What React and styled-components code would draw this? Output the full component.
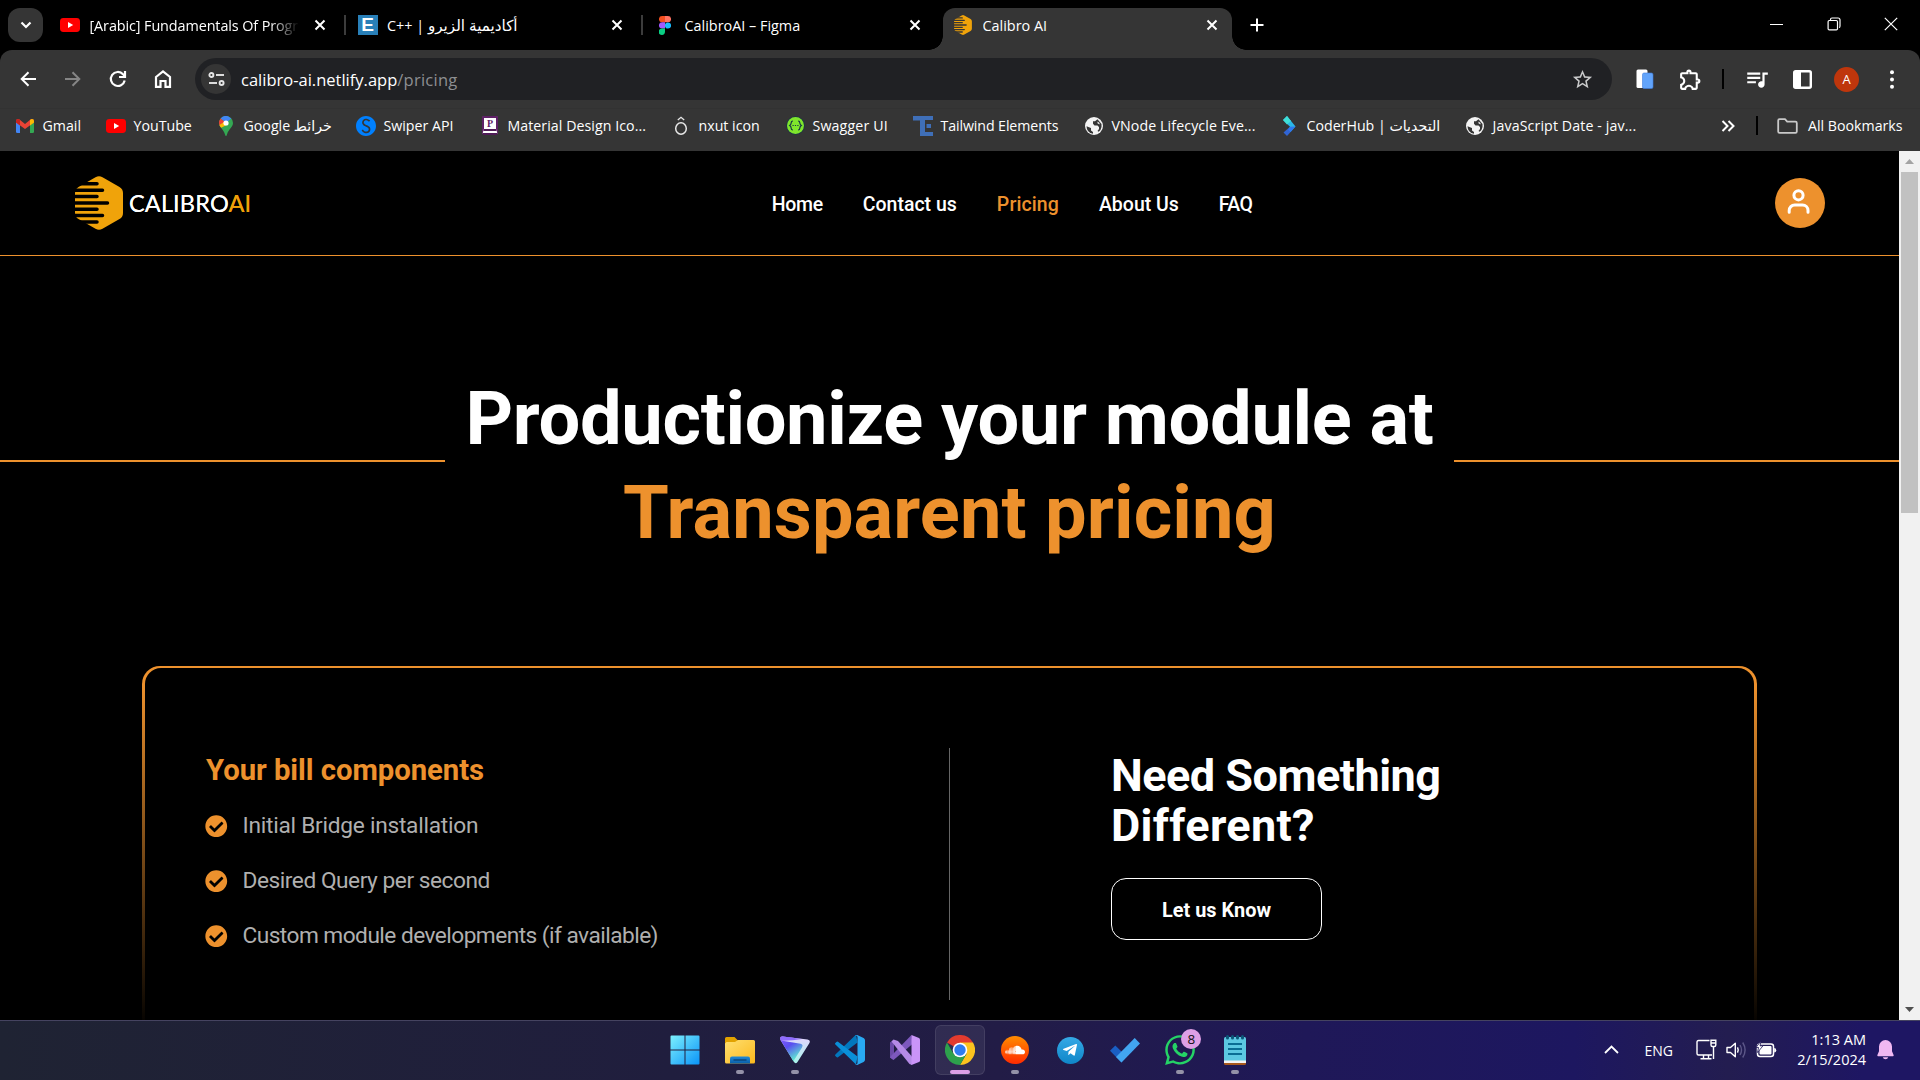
import React from "react";
import styled, { createGlobalStyle, css } from "styled-components";
import { SiSwiper } from "react-icons/si";
import { FaCheckCircle, FaWhatsapp, FaSoundcloud, FaTelegramPlane } from "react-icons/fa";
import { MdOutlineExtension, MdQueueMusic, MdStarBorder } from "react-icons/md";

const UI_FONT = '"Open Sans", "DejaVu Sans", sans-serif';
const SITE_FONT = 'Roboto, "Liberation Sans", sans-serif';
const ORANGE = "#ed912d";

const GlobalStyle = createGlobalStyle`
  * { box-sizing: border-box; }
  body { margin: 0; background: #000; overflow: hidden; }
`;

const Desktop = styled.div`
  display: flex;
  flex-direction: column;
  width: 1920px;
  height: 1080px;
  overflow: hidden;
  background: #000;
  font-family: ${UI_FONT};
  color: #fff;
`;

/* ---------- Tab strip ---------- */

const TabStrip = styled.div`
  display: flex;
  flex: none;
  height: 50px;
  padding: 8px 0 0 8px;
  background: #000;
`;

const TabSearch = styled.div`
  display: flex;
  align-items: center;
  justify-content: center;
  width: 35px;
  height: 34px;
  margin-right: 6px;
  border-radius: 12px;
  background: #353535;
`;

const Tab = styled.div`
  position: relative;
  display: flex;
  flex: none;
  align-items: center;
  width: 297.5px;
  height: 42px;
  padding: 0 0.7px 8px 11px;

  ${(p) =>
    p.$active &&
    css`
      width: 289px;
      margin-left: 1.5px;
      padding: 0 10px 8px;
      background: #353535;
      border-radius: 12px 12px 0 0;

      &::before,
      &::after {
        content: "";
        position: absolute;
        bottom: 0;
        width: 14px;
        height: 14px;
      }
      &::before {
        left: -14px;
        background: radial-gradient(circle at 0 0, transparent 13.5px, #353535 14px);
      }
      &::after {
        right: -14px;
        background: radial-gradient(circle at 100% 0, transparent 13.5px, #353535 14px);
      }
    `}
`;

const Favicon = styled.div`
  display: flex;
  flex: none;
  align-items: center;
  justify-content: center;
  width: 20px;
  height: 20px;
  margin-right: ${(p) => p.$gap ?? 9.5}px;
`;

const TabTitle = styled.div`
  flex: 1;
  overflow: hidden;
  padding-top: 1px;
  white-space: nowrap;
  font-size: 14.4px;
  line-height: 20px;
  ${(p) =>
    p.$fade &&
    css`
      margin-right: 11px;
      letter-spacing: -0.1px;
      mask-image: linear-gradient(90deg, #000 86%, transparent);
    `}
`;

const Arabic = styled.bdi`
  font-size: 15.2px;
  line-height: 1;
`;

const CloseSlot = styled.div`
  display: flex;
  align-items: center;
  justify-content: center;
  width: 20px;
  height: 20px;
  margin-right: ${(p) => (p.$active ? 0 : 14)}px;
`;

const TabDivider = styled.div`
  width: 2px;
  height: 20px;
  background: ${(p) => (p.$hidden ? "transparent" : "#3c3c3c")};
`;

const NewTab = styled.div`
  display: flex;
  align-items: center;
  justify-content: center;
  width: 34px;
  height: 34px;
  margin-left: 8px;
`;

const WindowControls = styled.div`
  display: flex;
  height: 34px;
  margin: -1px 1px 0 auto;
`;

const WindowControl = styled.div`
  display: flex;
  align-items: center;
  justify-content: center;
  width: 57px;
`;

/* ---------- Toolbar ---------- */

const ToolbarBack = styled.div`
  flex: none;
  background: #353535;
  border-radius: 12px 12px 0 0;
`;

const Toolbar = styled.div`
  display: flex;
  align-items: center;
  height: 58px;
  padding: 0 6px 0 5px;
`;

const ToolSlot = styled.div`
  display: flex;
  flex: none;
  align-items: center;
  justify-content: center;
  width: ${(p) => p.$w ?? 45}px;
  height: 42px;
`;

const Omnibox = styled.div`
  display: flex;
  align-items: center;
  width: 1417px;
  height: 42px;
  margin: 0 10px 0 10px;
  padding: 0 18px 0 6px;
  border-radius: 21px;
  background: #202124;
`;

const SiteInfo = styled.div`
  display: flex;
  align-items: center;
  justify-content: center;
  width: 30px;
  height: 30px;
  margin-right: 10px;
  border-radius: 50%;
  background: #353535;
`;

const Url = styled.div`
  flex: 1;
  font-size: 16.5px;
  line-height: 24px;
  padding-top: 1px;
`;

const UrlPath = styled.span`
  color: #8d8f92;
  letter-spacing: 0.25px;
`;

const ToolDivider = styled.div`
  width: 2px;
  height: 20px;
  background: #000;
`;

const Avatar = styled.div`
  width: 25px;
  height: 25px;
  border-radius: 50%;
  background: #bf360c;
  font-size: 13px;
  line-height: 25px;
  text-align: center;
`;

/* ---------- Bookmarks ---------- */

const BookmarksBar = styled.div`
  display: flex;
  align-items: center;
  height: 43px;
  padding: 0 0 9px 15px;
  border-top: 1px solid #323232;
  font-size: 14.2px;
  line-height: 20px;
  white-space: nowrap;
`;

const Bookmark = styled.div`
  display: flex;
  flex: none;
  align-items: center;
  width: ${(p) => p.$w}px;
  letter-spacing: ${(p) => p.$ls ?? 0}px;
`;

const Overflow = styled.div`
  display: flex;
  justify-content: center;
  width: 20px;
  margin-left: auto;
`;

const BookmarkDivider = styled.div`
  width: 2px;
  height: 19px;
  margin: 0 19px 0 18px;
  background: #000;
`;

const AllBookmarks = styled.div`
  display: flex;
  align-items: center;
  gap: 10px;
  width: 143px;
`;

/* ---------- Web page ---------- */

const Viewport = styled.div`
  display: flex;
  flex: none;
  height: 869px;
  overflow: hidden;
`;

const Page = styled.main`
  display: flex;
  flex-direction: column;
  width: 1899px;
  background: #000;
  font-family: ${SITE_FONT};
`;

const SiteHeader = styled.header`
  display: grid;
  grid-template-columns: 1fr auto 1fr;
  align-items: center;
  flex: none;
  height: 105px;
  padding: 0 74px 0 75px;
  border-bottom: 1px solid ${ORANGE};
`;

const Brand = styled.div`
  display: flex;
  align-items: center;
  gap: 6px;
`;

const Wordmark = styled.div`
  font: 400 23.5px/28px Lato, sans-serif;
  letter-spacing: 0.15px;
  padding-bottom: 1px;
  text-shadow: 0 0 0.6px currentColor;
`;

const WordmarkAccent = styled.span`
  color: #f0a009;
`;

const Nav = styled.nav`
  display: flex;
  gap: 40px;
  margin-left: 124px;
`;

const NavLink = styled.a`
  font-size: 19.5px;
  font-weight: 500;
  line-height: 24px;
  padding-top: 3px;
  letter-spacing: ${(p) => p.$ls ?? 0}px;
  color: ${(p) => (p.$active ? ORANGE : "#fff")};
`;

const UserButton = styled.div`
  display: flex;
  align-items: center;
  justify-content: center;
  justify-self: end;
  width: 50px;
  height: 50px;
  border-radius: 50%;
  background: ${ORANGE};
`;

const Hero = styled.section`
  display: flex;
  align-items: center;
  flex: none;
  height: 410px;
`;

const HeroRule = styled.div`
  width: 445px;
  height: 2px;
  background: ${ORANGE};
`;

const HeroTitle = styled.h1`
  flex: 1;
  margin: 0;
  padding-top: 10px;
  font-size: 74px;
  font-weight: 700;
  line-height: 94.5px;
  letter-spacing: -0.32px;
  text-align: center;
`;

const HeroAccent = styled.span`
  display: block;
  color: ${ORANGE};
  letter-spacing: 0.1px;
`;

const CardFrame = styled.section`
  flex: none;
  width: 1615px;
  height: 364px;
  margin-left: 142px;
  padding: 2px 3px 0;
  border-radius: 18px 18px 0 0;
  background: linear-gradient(${ORANGE} 16px, #000 100%);
`;

const Card = styled.div`
  display: grid;
  grid-template-columns: 804px 1px 1fr;
  height: 100%;
  padding-top: 80px;
  border-radius: 16px 16px 0 0;
  background: #000;
`;

const BillColumn = styled.div`
  padding: 4px 0 0 60px;
`;

const BillTitle = styled.h2`
  margin: 0 0 24px 1px;
  color: ${ORANGE};
  font-size: 29.3px;
  font-weight: 700;
  line-height: 36px;
  letter-spacing: -0.05px;
`;

const BillList = styled.ul`
  display: flex;
  flex-direction: column;
  gap: 27px;
  margin: 0;
  padding: 0;
  list-style: none;
`;

const BillItem = styled.li`
  display: flex;
  align-items: center;
  gap: 15px;
  height: 28px;
  color: #afafaf;
  font-size: 22.7px;
  line-height: 28px;
  letter-spacing: ${(p) => p.$ls}px;
`;

const CardDivider = styled.div`
  width: 1px;
  height: 252px;
  background: #666;
`;

const ContactColumn = styled.div`
  padding: 3px 0 0 161px;
`;

const ContactTitle = styled.h2`
  margin: 0 0 27px;
  font-size: 45px;
  font-weight: 700;
  line-height: 50px;
`;

const ContactLine = styled.span`
  display: block;
  letter-spacing: ${(p) => p.$ls}px;
`;

const ContactButton = styled.button`
  display: block;
  width: 211px;
  height: 62px;
  padding: 3px 0 0;
  border: 1px solid #fff;
  border-radius: 15px;
  background: transparent;
  color: #fff;
  font: 700 19.9px/24px ${SITE_FONT};
`;

const Scrollbar = styled.div`
  display: flex;
  flex-direction: column;
  align-items: center;
  justify-content: space-between;
  width: 21px;
  background: #f1f1f1;
`;

const ScrollArrow = styled.div`
  display: flex;
  align-items: center;
  justify-content: center;
  height: 21px;
`;

const ScrollThumb = styled.div`
  width: 17px;
  height: 341px;
  margin-bottom: auto;
  background: #c1c1c1;
`;

/* ---------- Taskbar ---------- */

const Taskbar = styled.footer`
  display: flex;
  flex: none;
  height: 60px;
  padding-left: 656.5px;
  border-top: 1px solid #454360;
  background: linear-gradient(
    90deg,
    #1f2333 0%,
    #201e3e 35%,
    #221c46 52%,
    #1f1858 68%,
    #1d1760 82%,
    #231d50 90%,
    #1e1663 97%,
    #1e1663 100%
  );
`;

const TaskSlot = styled.div`
  display: flex;
  flex: none;
  justify-content: center;
  width: 55.1px;
  margin-left: ${(p) => (p.$first ? 0.5 : 0)}px;
`;

const TaskTile = styled.div`
  display: flex;
  flex-direction: column;
  align-items: center;
  width: 50px;
  height: 50px;
  margin-top: 4px;
  padding-top: 10px;
  border-radius: 6px;
  border: 1px solid ${(p) => (p.$active ? "rgba(255,255,255,0.09)" : "transparent")};
  background: ${(p) => (p.$active ? "rgba(255,255,255,0.07)" : "transparent")};
`;

const TaskIcon = styled.div`
  position: relative;
  display: flex;
  align-items: center;
  justify-content: center;
  width: 30px;
  height: 28px;
  margin-bottom: 6px;
  svg { flex: none; }
`;

const RoundIcon = styled.div`
  display: flex;
  flex: none;
  align-items: center;
  justify-content: center;
  width: ${(p) => p.$size}px;
  height: ${(p) => p.$size}px;
  border-radius: 50%;
  background: ${(p) => p.$fill};
`;

const Indicator = styled.div`
  width: ${(p) => (p.$active ? 20 : 8)}px;
  height: 4px;
  border-radius: 2px;
  background: ${(p) => (p.$active ? "#dc9fe6" : "#9492a8")};
`;

const Badge = styled.div`
  position: absolute;
  top: -7px;
  right: -6px;
  width: 20px;
  height: 20px;
  border-radius: 50%;
  background: #dd9fe5;
  color: #111;
  font-size: 13.5px;
  line-height: 20px;
  text-align: center;
`;

const Tray = styled.div`
  display: flex;
  align-items: center;
  margin-left: auto;
  padding: 0 16px 2px 0;
`;

const TrayIcon = styled.div`
  display: flex;
  align-items: center;
  justify-content: center;
  width: ${(p) => p.$w ?? 30}px;
`;

const Language = styled.div`
  margin: 2px 18px 0 25px;
  font-size: 14px;
`;

const Clock = styled.div`
  width: 85px;
  padding-top: 1px;
  font-size: 14.5px;
  line-height: 20px;
  text-align: right;
`;

/* ---------- Icons ---------- */

const Line = ({ d, w = 16, h = 16, sw = 2, color = "#fff", join = "miter", cap = "butt" }) => (
  <svg width={w} height={h} viewBox={`0 0 ${w} ${h}`} fill="none" stroke={color} strokeWidth={sw} strokeLinejoin={join} strokeLinecap={cap}>
    <path d={d} />
  </svg>
);

const CloseIcon = () => <Line w={12} h={12} d="M1.5 1.5l9 9M10.5 1.5l-9 9" />;

const YoutubeIcon = () => (
  <svg width="20" height="14" viewBox="0 0 20 14">
    <rect width="20" height="14" rx="3.4" fill="#f00" />
    <path d="M8 4v6l5.2-3z" fill="#fff" />
  </svg>
);

const LetterBox = styled.div`
  width: 20px;
  height: 20px;
  background: #2980b9;
  font: 700 19px/20px "Liberation Sans", sans-serif;
  text-align: center;
`;

const FigmaIcon = () => (
  <svg width="12" height="19" viewBox="0 0 12 19">
    <path d="M6 0H3.1a3.1 3.1 0 0 0 0 6.3H6z" fill="#f24e1e" />
    <path d="M6 0h2.9a3.1 3.1 0 0 1 0 6.3H6z" fill="#ff7262" />
    <path d="M6 6.3H3.1a3.1 3.1 0 0 0 0 6.3H6z" fill="#a259ff" />
    <circle cx="9" cy="9.5" r="3.1" fill="#1abcfe" />
    <path d="M6 12.6H3.1A3.15 3.15 0 1 0 6 15.8z" fill="#0acf83" />
  </svg>
);

const CalibroMark = ({ w, h, gap }) => (
  <svg width={w} height={h} viewBox="0 0 48 54">
    <path d="M20.5 1.2q3.5-2 7 0L44.5 11Q48 13 48 17v20q0 4-3.5 6L27.5 52.8q-3.5 2-7 0L3.5 43Q0 41 0 37V17q0-4 3.5-6z" fill="#f0a30a" />
    <g stroke={gap} strokeWidth="3.5" strokeLinecap="round">
      <path d="M-3 7.8H22M-3 14.3H27.5M-3 20.6H22M-3 27H32.5M-3 33.3H22M-3 39.4H27.5M-3 45.9H22" />
    </g>
  </svg>
);

const GmailIcon = () => (
  <svg width="18" height="14" viewBox="0 0 18 14">
    <path d="M0 2v10.7Q0 14 1.3 14H4V5z" fill="#4285f4" />
    <path d="M18 2v10.7Q18 14 16.7 14H14V5z" fill="#34a853" />
    <path d="M0 2.2Q0 0 2 0q.8 0 1.5.6L9 4.9V10L0 3.6z" fill="#ea4335" />
    <path d="M18 2.2Q18 0 16 0q-.8 0-1.5.6L9 4.9V10l9-6.4z" fill="#ea4335" />
    <path d="M14 1.1Q15 0 16 0q2 0 2 2.2v1.4l-4 2.9z" fill="#fbbc04" />
    <path d="M0 2.2Q0 0 2 0 3 0 4 1.1v5.4L0 3.6z" fill="#c5221f" />
  </svg>
);

const MapsIcon = () => (
  <svg width="14" height="20" viewBox="0 0 14 20">
    <path d="M7 0a7 7 0 0 1 7 7c0 4-4.5 6-6 11.5Q7.6 20 7 20t-1-1.5C4.5 13 0 11 0 7a7 7 0 0 1 7-7z" fill="#34a853" />
    <path d="M2.2 11.8 9.5 8 4.600 4.500 .4 9Q1 10.500 2.200 11.800z" fill="#fbbc04" />
    <path d="M7 7 1.6 2.5A7 7 0 0 1 9 .3L12.300 2.500z" fill="#4285f4" />
    <path d="M1.6 2.5A7 7 0 0 0 0 7q0 1.200.4 2L5.5 5.700z" fill="#ea4335" />
    <circle cx="7" cy="7" r="2.6" fill="#fff" />
  </svg>
);

const BookTile = styled.div`
  width: 16px;
  height: 19px;
  border-radius: 2px;
  border: 2px solid #5f2167;
  border-bottom: 6px double #4f1a57;
  background: #fff;
  color: #5f2167;
  font: 700 10px/11px "Liberation Serif", serif;
  text-align: center;
`;

const HatIcon = () => (
  <svg width="14" height="20" viewBox="0 0 14 20" fill="none" stroke="#e8e8e8">
    <ellipse cx="7" cy="12.5" rx="5.3" ry="5.8" strokeWidth="1.5" />
    <path d="M3.8 4 7 1.3 10.2 4" strokeWidth="1.3" />
  </svg>
);

const SwaggerIcon = () => (
  <svg width="19" height="19" viewBox="0 0 19 19">
    <circle cx="9.5" cy="9.5" r="9.3" fill="#173647" />
    <circle cx="9.5" cy="9.5" r="8.5" fill="#7fe62c" />
    <g fill="none" stroke="#173647" strokeWidth="1.2">
      <path d="M7 5q-1.8 0-1.8 1.8T3.7 9.5q1.5.9 1.5 2.7T7 14M12 5q1.8 0 1.8 1.8t1.5 2.7q-1.5.9-1.5 2.7T12 14" />
      <path d="M6.5 9.5h1.2M8.9 9.5h1.2M11.3 9.5h1.2" />
    </g>
  </svg>
);

const TailwindElementsIcon = () => (
  <svg width="20" height="20" viewBox="0 0 20 20" fill="#3f6fb8">
    <path d="M0 0h12v20H7V4.5H0zM13.5 0H20v4h-6.5zM13.5 8H18v4h-4.5zM13.5 16H20v4h-6.5z" />
    <path d="M12 0h2v4h-2zM12 16h2v4h-2z" />
  </svg>
);

const GlobeIcon = () => (
  <svg width="18" height="18" viewBox="0 0 18 18">
    <circle cx="9" cy="9" r="9" fill="#f4f4f4" />
    <path d="M1.5 9.2 6 11v2.5l2 1.5v1.8A8 8 0 0 1 1.5 9.2z" fill="#353535" />
    <path d="M12.5 2.3 10 4.2H8v2.5L9.5 8.5h3L14 10v2l-1.500 2 1.200.8A7.600 7.600 0 0 0 16.500 10V7z" fill="#353535" />
    <path d="M12.500 4.500v1.700l2 1.300v-1.500z" fill="#f4f4f4" />
  </svg>
);

const CoderHubIcon = () => (
  <svg width="14" height="20" viewBox="0 0 14 20">
    <path d="M1 4 5 0l8.5 10.5L8.5 16 6 13.5 8 10.8z" fill="#2bb7e8" />
    <path d="M1 4 5 0l4 5-4 3.5z" fill="#3fe0d8" />
    <path d="M13.5 10.5 5 20l-3.500-3.500L8 10.800z" fill="#2f6cf0" opacity=".85" />
  </svg>
);

const PhoneIcon = () => (
  <svg width="18" height="20" viewBox="0 0 18 20">
    <rect x="0.5" y="0.5" width="11" height="18.5" rx="1.5" fill="#fff" />
    <rect x="6.5" y="4" width="10.5" height="15.5" rx="1.5" fill="#62a4fb" stroke="#3f7ede" strokeWidth=".6" />
  </svg>
);

const SidePanelIcon = () => (
  <svg width="19" height="19" viewBox="0 0 19 19">
    <rect x="1.2" y="1.2" width="16.6" height="16.6" rx="1.5" fill="none" stroke="#fff" strokeWidth="2.4" />
    <path d="M1 1h7v17H1z" fill="#fff" />
  </svg>
);

const TuneIcon = () => (
  <svg width="17" height="14" viewBox="0 0 17 14" fill="none" stroke="#e6e6e6" strokeWidth="1.9">
    <circle cx="3.4" cy="3" r="2" />
    <path d="M8 3h8" />
    <circle cx="13.6" cy="11" r="2" />
    <path d="M1 11h8" />
  </svg>
);

const UserIcon = () => (
  <svg width="30" height="30" viewBox="0 0 30 30" fill="none" stroke="#fff" strokeWidth="3" strokeLinecap="round">
    <circle cx="13.5" cy="7.3" r="4.6" />
    <path d="M4.200 24.300V22.500a5.500 5.500 0 0 1 5.500-5.500h7.800a5.500 5.500 0 0 1 5.500 5.500v1.800" />
  </svg>
);

const WindowsIcon = () => (
  <svg width="30" height="30" viewBox="0 0 30 30">
    <defs>
      <linearGradient id="win" x1="0" y1="0" x2="1" y2="1">
        <stop offset="0" stopColor="#7df0fd" />
        <stop offset="1" stopColor="#0a94f8" />
      </linearGradient>
    </defs>
    <path d="M.5 1.5Q.5.5 1.5.5H14.5V14.5H.5zM15.5.5H28.5Q29.5.5 29.5 1.5V14.5H15.5zM.5 15.5H14.5V29.5H1.5Q.5 29.5.5 28.5zM15.5 15.5H29.5V28.5Q29.5 29.5 28.5 29.5H15.5z" fill="url(#win)" />
  </svg>
);

const ExplorerIcon = () => (
  <svg width="30" height="27" viewBox="0 0 30 27">
    <defs>
      <linearGradient id="fold" x1="0" y1="0" x2="1" y2="1">
        <stop offset="0" stopColor="#ffdf70" />
        <stop offset="1" stopColor="#fbb91d" />
      </linearGradient>
      <linearGradient id="foldb" x1="0" y1="0" x2="0" y2="1">
        <stop offset="0" stopColor="#1f8ad8" />
        <stop offset="1" stopColor="#0a5fa8" />
      </linearGradient>
    </defs>
    <path d="M0 1.5Q0 0 1.5 0H9.5L13 3.5H28.5V10H0z" fill="#e2a200" />
    <path d="M0 6.5 1.5 5H10l3-2H28.5Q30 3 30 4.5V25q0 1.5-1.5 1.5h-27Q0 26.5 0 25z" fill="url(#fold)" />
    <path d="M5 26.5V21.5q0-2 2-2H23q2 0 2 2v5z" fill="url(#foldb)" />
    <path d="M8.5 23H21.5" stroke="#0b4478" strokeWidth="1.4" />
  </svg>
);

const ProtonIcon = () => (
  <svg width="30" height="28" viewBox="0 0 30 28">
    <defs>
      <linearGradient id="pv" x1="0" y1="0" x2=".6" y2="1">
        <stop offset="0" stopColor="#8a5cff" />
        <stop offset=".45" stopColor="#5a4ff0" />
        <stop offset="1" stopColor="#5ff0d0" />
      </linearGradient>
      <linearGradient id="pv2" x1="0" y1="0" x2="0" y2="1">
        <stop offset="0" stopColor="#e4d4ff" />
        <stop offset="1" stopColor="#a8f4ea" />
      </linearGradient>
    </defs>
    <path d="M2.5.6 27.5 3.6Q31 4.2 29.3 7.2L17.5 26q-2 2.6-3.7-.2L.5 4Q-.8.3 2.5.6z" fill="url(#pv2)" />
    <path d="M2.5.6Q-.8.3.5 4L13.4 25.2 22 11.5Q23.6 8.3 20.5 7.7L1 4.5Q4 3.5 15 2z" fill="url(#pv)" />
    <path d="M2.5.6 22 3Q12 5 1.5 4.8-.6 1 2.5.6z" fill="#8f6cff" />
  </svg>
);

const VsCodeIcon = () => (
  <svg width="30" height="30" viewBox="0 0 30 30">
    <path d="M22.5 7.5 3 22.200q-.8.500-1.600-.1L.4 21.100q-.7-.7 0-1.500L21 -.4z" fill="#0277bd" />
    <path d="M22.5 21.5 3 6.8q-.8-.5-1.600.1L.4 7.900q-.7.700 0 1.500L21 29.400z" fill="#0a8fd8" />
    <path d="M22.2 0 28.6 3Q30 3.700 30 5.200V24.800q0 1.500-1.400 2.200L22.200 30q-1.200.4-2-.6 2.300.6 2.300-1.600V2.200Q22.500 0 20.200.6q.8-1 2-.6z" fill="#29a9f2" />
  </svg>
);

const VisualStudioIcon = () => (
  <svg width="30" height="30" viewBox="0 0 30 30">
    <path d="M0 7.500 3.500 5 4 10v9l-.5 6L0 22.500z" fill="#6b4aa8" />
    <path d="M21.500 0 1.500 20.500 0 22.500 3.500 25 22.500 9z" fill="#7d58bd" />
    <path d="M8 6 3.500 4.500 1.500 6.500 19.500 29 22 30V21.500z" fill="#b58ae6" />
    <path d="M21.500 0 29 3q1 .5 1 1.500v21q0 1-1 1.500L21.500 30z" fill="#ca94f8" />
  </svg>
);

const ChromeIcon = () => (
  <svg width="30" height="30" viewBox="0 0 30 30">
    <path d="M15 15 2 7.5A15 15 0 0 1 28 7.5z" fill="#e33b2e" />
    <path d="M15 7.5H28A15 15 0 0 1 15 30L21.5 18.7z" fill="#fcc31e" />
    <path d="M15 30A15 15 0 0 1 2 7.5L8.5 18.7 15 22.5 21.5 18.7z" fill="#2da14c" />
    <circle cx="15" cy="15" r="7.3" fill="#fff" />
    <circle cx="15" cy="15" r="5.7" fill="#2f7cf0" />
  </svg>
);

const TodoIcon = () => (
  <svg width="30" height="25" viewBox="0 0 30 25">
    <path d="M0 12.7 5.3 7.5 15.5 17.5 11.5 24.5z" fill="#1a5fc4" />
    <path d="M24.7 0 30 5.5 11.5 24.5 6 19z" fill="#42a5f0" />
  </svg>
);

const NotepadIcon = () => (
  <svg width="22" height="30" viewBox="0 0 22 30">
    <path d="M0 25H22V28.5Q22 30 20.5 30H1.5Q0 30 0 28.5z" fill="#a8581c" />
    <path d="M0 24H22V28H0z" fill="#f3f3f3" />
    <path d="M0 3.5Q0 2 1.5 2H20.5Q22 2 22 3.5V25.5H0z" fill="#5cc8e2" />
    <path d="M4 9H18M4 14H18M4 19H18" stroke="#0a6d94" strokeWidth="1.9" />
    <path d="M3.5 1.5V3M8.5 1.5V3M13.5 1.5V3M18.5 1.5V3" stroke="#0c5878" strokeWidth="3" strokeLinecap="round" />
  </svg>
);

const NetworkIcon = () => (
  <svg width="21" height="21" viewBox="0 0 21 21" fill="none" stroke="#fff" strokeWidth="1.4">
    <path d="M13.5 1.500H2.500Q1 1.500 1 3V14.500Q1 16 2.500 16H16M7.500 16v3.500M12.500 16v3.500M4.500 19.800H15.500" />
    <path d="M15 1.200h4.800V6q0 1.500-1.500 1.500h-1.800Q15 7.500 15 6zM17.500 7.500V20M15 4h4.800" />
  </svg>
);

const SpeakerIcon = () => (
  <svg width="21" height="18" viewBox="0 0 21 18" fill="none" stroke="#fff" strokeWidth="1.4">
    <path d="M1 6.500H4.500L9.300 2.300V15.700L4.500 11.500H1z" strokeLinejoin="round" />
    <path d="M11.500 6.300Q13 9 11.500 11.700" />
    <path d="M14 4Q17 9 14 14M16.700 1.500Q21.500 9 16.700 16.500" stroke="#5c5788" />
  </svg>
);

const BatteryIcon = () => (
  <svg width="21" height="18" viewBox="0 0 21 18">
    <rect x="1.500" y="3" width="16" height="12.500" rx="2.500" fill="none" stroke="#fff" strokeWidth="1.500" />
    <rect x="3.500" y="5" width="12" height="8.500" rx="1" fill="#fff" />
    <path d="M18.200 7q2 0 2 2.200t-2 2.200z" fill="#fff" />
    <path d="M5 0 0 6.500H2.500L1.500 11.500 7 4.800H4z" fill="#fff" stroke="#1f1858" strokeWidth=".8" />
  </svg>
);

const BellIcon = () => (
  <svg width="17" height="20" viewBox="0 0 17 20" fill="#f0b8f2">
    <path d="M8.500 0a6.500 6.500 0 0 1 6.500 6.500v4.800L16.600 15q.4 1.200-.8 1.200H1.200Q0 16.200.4 15L2 11.300V6.500A6.500 6.500 0 0 1 8.500 0z" />
    <path d="M5.800 17.200h5.400q-.5 2-2.700 2t-2.700-2z" />
  </svg>
);

/* ---------- Data ---------- */

const tabs = [
  { id: "video", title: "[Arabic] Fundamentals Of Progr", icon: <YoutubeIcon />, fade: true },
  { id: "course", title: <>C++ | <Arabic>أكاديمية الزيرو</Arabic></>, icon: <LetterBox>E</LetterBox> },
  { id: "design", title: "CalibroAI – Figma", icon: <FigmaIcon />, last: true },
  { id: "site", title: "Calibro AI", icon: <CalibroMark w={20} h={20} gap="#353535" />, active: true },
];

const bookmarks = [
  { label: "Gmail", w: 91, icon: <GmailIcon /> },
  { label: "YouTube", w: 110, icon: <YoutubeIcon /> },
  { label: "Google خرائط", w: 140, icon: <MapsIcon /> },
  { label: "Swiper API", w: 124, icon: <SiSwiper size={20} color="#0080ff" /> },
  { label: "Material Design Ico...", w: 191, ls: 0.05, icon: <BookTile>P</BookTile> },
  { label: "nxut icon", w: 114, icon: <HatIcon /> },
  { label: "Swagger UI", w: 128, ls: 0.15, icon: <SwaggerIcon /> },
  { label: "Tailwind Elements", w: 171, ls: -0.1, icon: <TailwindElementsIcon /> },
  { label: "VNode Lifecycle Eve...", w: 195, ls: 0.1, icon: <GlobeIcon /> },
  { label: "CoderHub | التحديات", w: 186, icon: <CoderHubIcon /> },
  { label: "JavaScript Date - jav...", w: 190, ls: 0.12, icon: <GlobeIcon /> },
];

const navLinks = [
  { label: "Home", ls: -0.3 },
  { label: "Contact us" },
  { label: "Pricing", active: true, ls: 0.1 },
  { label: "About Us" },
  { label: "FAQ", ls: -0.6 },
];

const billItems = [
  { label: "Initial Bridge installation", ls: -0.25 },
  { label: "Desired Query per second", ls: -0.46 },
  { label: "Custom module developments (if available)", ls: -0.54 },
];

const apps = [
  { id: "start", icon: <WindowsIcon /> },
  { id: "explorer", icon: <ExplorerIcon />, open: true },
  { id: "vpn", icon: <ProtonIcon />, open: true },
  { id: "code", icon: <VsCodeIcon /> },
  { id: "studio", icon: <VisualStudioIcon /> },
  { id: "chrome", icon: <ChromeIcon />, open: true, active: true },
  {
    id: "soundcloud",
    open: true,
    icon: (
      <RoundIcon $size={28} $fill="linear-gradient(#ff8c00, #ff2a00)">
        <FaSoundcloud size={20} color="#fff" />
      </RoundIcon>
    ),
  },
  {
    id: "telegram",
    icon: (
      <RoundIcon $size={27} $fill="linear-gradient(#35a9e6, #0f86c8)">
        <FaTelegramPlane size={16} color="#fff" />
      </RoundIcon>
    ),
  },
  { id: "todo", icon: <TodoIcon /> },
  { id: "whatsapp", icon: <FaWhatsapp size={34} color="#25d366" />, open: true, badge: "8" },
  { id: "notepad", icon: <NotepadIcon />, open: true },
];

export default function App() {
  return (
    <Desktop>
      <GlobalStyle />

      <TabStrip>
        <TabSearch>
          <Line w={12} h={8} sw={2.2} d="M1.5 1.5 6 6 10.5 1.5" />
        </TabSearch>
        {tabs.map((t) => (
          <Tab key={t.id} $active={t.active}>
            <Favicon>{t.icon}</Favicon>
            <TabTitle $fade={t.fade}>{t.title}</TabTitle>
            <CloseSlot $active={t.active}>
              <CloseIcon />
            </CloseSlot>
            {!t.active && <TabDivider $hidden={t.last} />}
          </Tab>
        ))}
        <NewTab>
          <Line w={14} h={14} d="M7 .5v13M.5 7h13" />
        </NewTab>
        <WindowControls>
          <WindowControl>
            <Line w={13} h={3} sw={1} d="M0 1.5h13" />
          </WindowControl>
          <WindowControl>
            <Line w={14} h={14} sw={1.2} d="M3.5 3V2.5q0-1.5 1.500-1.500h6q2 0 2 2v6q0 1.500-1 1.500M2.300 3.500h7q1.200 0 1.200 1.200v7q0 1.200-1.200 1.200h-7q-1.200 0-1.200-1.200v-7q0-1.200 1.200-1.200z" />
          </WindowControl>
          <WindowControl>
            <Line w={14} h={14} sw={1.2} d="M.8.8l12.4 12.4M13.2.8.8 13.2" />
          </WindowControl>
        </WindowControls>
      </TabStrip>

      <ToolbarBack>
        <Toolbar>
          <ToolSlot>
            <Line w={16} h={16} d="M16 8H2M8.5 1.2 1.7 8l6.8 6.8" />
          </ToolSlot>
          <ToolSlot>
            <Line w={16} h={16} color="#858585" d="M0 8h14M7.5 1.2 14.3 8l-6.8 6.8" />
          </ToolSlot>
          <ToolSlot>
            <Line w={18} h={18} sw={2.2} d="M15.7 10.5A7 7 0 1 1 14 4.2L15.8 6M16 1v6h-6" />
          </ToolSlot>
          <ToolSlot>
            <Line w={18} h={18} sw={2.2} d="M2 7 9 1.5 16 7V16.900H11.500V11h-5v5.900H2z" />
          </ToolSlot>
          <Omnibox>
            <SiteInfo>
              <TuneIcon />
            </SiteInfo>
            <Url>
              calibro-ai.netlify.app<UrlPath>/pricing</UrlPath>
            </Url>
            <MdStarBorder size={23} color="#c9cacb" />
          </Omnibox>
          <ToolSlot>
            <PhoneIcon />
          </ToolSlot>
          <ToolSlot $w={47}>
            <MdOutlineExtension size={25} color="#fff" />
          </ToolSlot>
          <ToolSlot $w={18}>
            <ToolDivider />
          </ToolSlot>
          <ToolSlot $w={50}>
            <MdQueueMusic size={26} color="#fff" />
          </ToolSlot>
          <ToolSlot $w={40}>
            <SidePanelIcon />
          </ToolSlot>
          <ToolSlot $w={49}>
            <Avatar>A</Avatar>
          </ToolSlot>
          <ToolSlot $w={42}>
            <svg width="4" height="19" viewBox="0 0 4 19" fill="#fff">
              <circle cx="2" cy="2.2" r="2" />
              <circle cx="2" cy="9.5" r="2" />
              <circle cx="2" cy="16.8" r="2" />
            </svg>
          </ToolSlot>
        </Toolbar>
        <BookmarksBar>
          {bookmarks.map((b) => (
            <Bookmark key={b.label} $w={b.w} $ls={b.ls}>
              <Favicon $gap={7.5}>{b.icon}</Favicon>
              {b.label}
            </Bookmark>
          ))}
          <Overflow>
            <Line w={14} h={12} sw={2} d="M1.500 1 6.500 6l-5 5M7.500 1l5 5-5 5" />
          </Overflow>
          <BookmarkDivider />
          <AllBookmarks>
            <Line w={21} h={16} sw={1.8} color="#c9c9c9" join="round" d="M1.2 2.5Q1.2 1.2 2.5 1.2H8L10.2 3.6H18.5Q19.8 3.6 19.8 4.9V13.5Q19.8 14.8 18.5 14.8H2.5Q1.2 14.8 1.2 13.5z" />
            All Bookmarks
          </AllBookmarks>
        </BookmarksBar>
      </ToolbarBack>

      <Viewport>
        <Page>
          <SiteHeader>
            <Brand>
              <CalibroMark w={48} h={54} gap="#000" />
              <Wordmark>
                CALIBRO<WordmarkAccent>AI</WordmarkAccent>
              </Wordmark>
            </Brand>
            <Nav>
              {navLinks.map((l) => (
                <NavLink key={l.label} $active={l.active} $ls={l.ls}>
                  {l.label}
                </NavLink>
              ))}
            </Nav>
            <UserButton>
              <UserIcon />
            </UserButton>
          </SiteHeader>

          <Hero>
            <HeroRule />
            <HeroTitle>
              Productionize your module at
              <HeroAccent>Transparent pricing</HeroAccent>
            </HeroTitle>
            <HeroRule />
          </Hero>

          <CardFrame>
            <Card>
              <BillColumn>
                <BillTitle>Your bill components</BillTitle>
                <BillList>
                  {billItems.map((i) => (
                    <BillItem key={i.label} $ls={i.ls}>
                      <FaCheckCircle size={22.5} color={ORANGE} />
                      {i.label}
                    </BillItem>
                  ))}
                </BillList>
              </BillColumn>
              <CardDivider />
              <ContactColumn>
                <ContactTitle>
                  <ContactLine $ls={-0.5}>Need Something</ContactLine>
                  <ContactLine $ls={0.35}>Different?</ContactLine>
                </ContactTitle>
                <ContactButton>Let us Know</ContactButton>
              </ContactColumn>
            </Card>
          </CardFrame>
        </Page>
        <Scrollbar>
          <ScrollArrow>
            <svg width="9" height="5" viewBox="0 0 9 5"><path d="M0 5 4.5 0 9 5z" fill="#a3a3a3" /></svg>
          </ScrollArrow>
          <ScrollThumb />
          <ScrollArrow>
            <svg width="9" height="5" viewBox="0 0 9 5"><path d="M0 0 4.5 5 9 0z" fill="#505050" /></svg>
          </ScrollArrow>
        </Scrollbar>
      </Viewport>

      <Taskbar>
        {apps.map((a, i) => (
          <TaskSlot key={a.id} $first={i === 0}>
            <TaskTile $active={a.active}>
              <TaskIcon>
                {a.icon}
                {a.badge && <Badge>{a.badge}</Badge>}
              </TaskIcon>
              {a.open && <Indicator $active={a.active} />}
            </TaskTile>
          </TaskSlot>
        ))}
        <Tray>
          <TrayIcon $w={16}>
            <Line w={15} h={9} sw={1.8} d="M1 8 7.5 1.5 14 8" />
          </TrayIcon>
          <Language>ENG</Language>
          <TrayIcon><NetworkIcon /></TrayIcon>
          <TrayIcon><SpeakerIcon /></TrayIcon>
          <TrayIcon><BatteryIcon /></TrayIcon>
          <Clock>
            1:13 AM
            <br />
            2/15/2024
          </Clock>
          <TrayIcon $w={38}><BellIcon /></TrayIcon>
        </Tray>
      </Taskbar>
    </Desktop>
  );
}
